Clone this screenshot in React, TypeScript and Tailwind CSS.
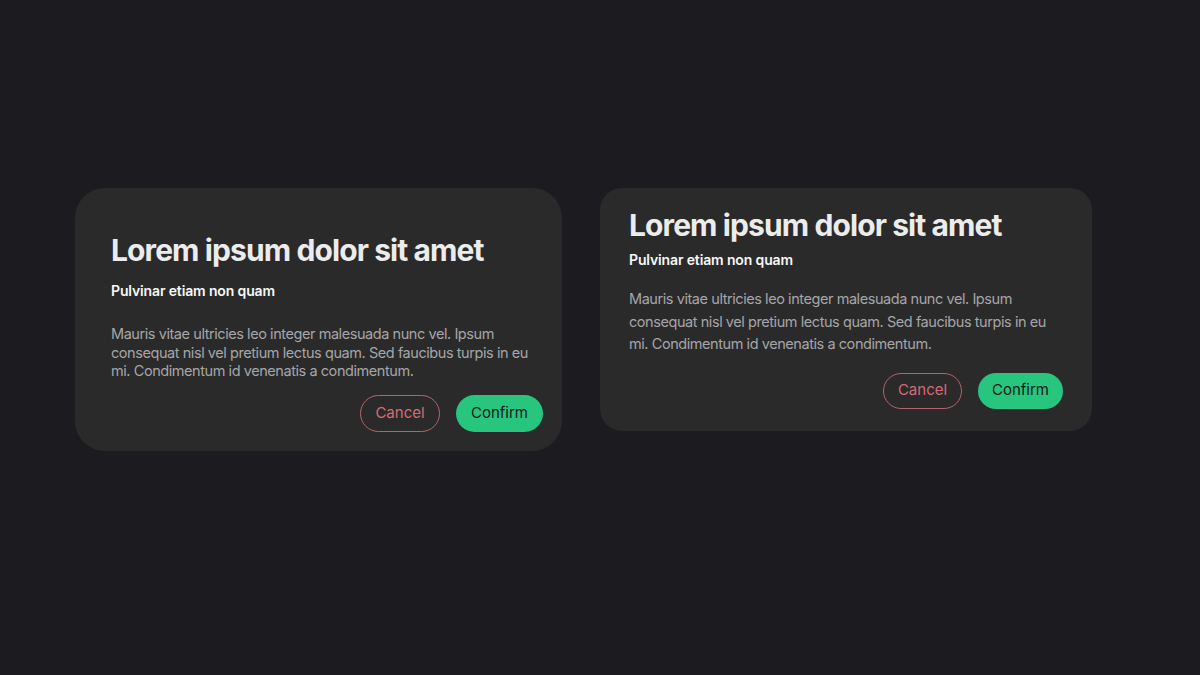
import React from 'react'

const body =
  'Mauris vitae ultricies leo integer malesuada nunc vel. Ipsum consequat nisl vel pretium lectus quam. Sed faucibus turpis in eu mi. Condimentum id venenatis a condimentum.'

const Buttons: React.FC<{ h: string; w1: string; w2: string }> = ({ h, w1, w2 }) => (
  <div className="flex justify-end gap-4">
    <button className={`${h} ${w1} rounded-full border border-[#b7636b] text-[15px] text-[#d76b73]`}>
      Cancel
    </button>
    <button className={`${h} ${w2} rounded-full bg-[#27c57d] text-[15px] text-[#15191a]`}>
      Confirm
    </button>
  </div>
)

const App: React.FC = () => {
  return (
    <div
      className="flex min-h-[675px] w-full items-start gap-[38px] bg-[#1c1b20] pl-[75px] pt-[188px]"
      style={{ fontFamily: 'Inter, "Noto Sans", sans-serif' }}
    >
      <div className="flex w-[487px] flex-col rounded-[30px] bg-[#2a2a2b] pb-[19px] pl-[36px] pr-[19px] pt-[44px]">
        <h1 className="text-[30px] font-bold leading-[36px] tracking-[-0.03em] text-[#ececec]">
          Lorem ipsum dolor sit amet
        </h1>
        <h2 className="mt-[13px] text-[14px] font-semibold leading-[20px] tracking-[-0.01em] text-[#f7f7f7]">
          Pulvinar etiam non quam
        </h2>
        <p className="mt-[24px] max-w-[424px] text-[14.5px] leading-[18.5px] tracking-[-0.03em] text-[#a6a6a8]">
          {body}
        </p>
        <div className="mt-[14px]">
          <Buttons h="h-[37px]" w1="w-[80px]" w2="w-[87px]" />
        </div>
      </div>

      <div className="flex w-[492px] flex-col rounded-[22px] bg-[#2a2a2b] pb-[22px] pl-[29px] pr-[29px] pt-[19px]">
        <h1 className="text-[30px] font-bold leading-[36px] tracking-[-0.03em] text-[#ececec]">
          Lorem ipsum dolor sit amet
        </h1>
        <h2 className="mt-[7px] text-[14px] font-semibold leading-[20px] tracking-[-0.01em] text-[#f7f7f7]">
          Pulvinar etiam non quam
        </h2>
        <p className="mt-[18px] max-w-[424px] text-[14.5px] leading-[22.5px] tracking-[-0.03em] text-[#a6a6a8]">
          {body}
        </p>
        <div className="mt-[17px]">
          <Buttons h="h-[36px]" w1="w-[79px]" w2="w-[85px]" />
        </div>
      </div>
    </div>
  )
}

export default App
